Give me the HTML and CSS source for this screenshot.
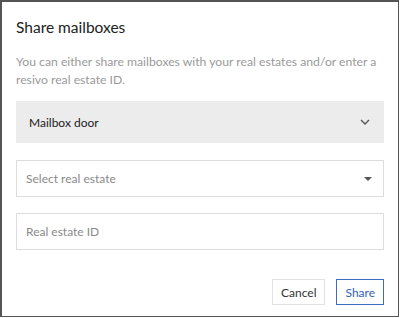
FILE: index.html
```html
<!DOCTYPE html>
<html lang="en">
<head>
    <meta charset="UTF-8">
    <meta name="viewport" content="width=device-width, initial-scale=1.0">
    <title>Share mailboxes</title>
    <link rel="stylesheet" href="styles.css">
</head>
<body>
    <div class="dialog">
        <h2 class="dialog-title">Share mailboxes</h2>
        <p class="dialog-text">You can either share mailboxes with your real estates and/or enter a resivo real estate ID.</p>

        <div class="accordion">
            <span>Mailbox door</span>
            <svg class="chevron" width="10" height="6" viewBox="0 0 10 6">
                <path d="M1 1 L5 5 L9 1" fill="none" stroke="#555" stroke-width="1.4"/>
            </svg>
        </div>

        <div class="field select">
            <span>Select real estate</span>
            <span class="caret"></span>
        </div>

        <div class="field">
            <span>Real estate ID</span>
        </div>

        <div class="actions">
            <button class="btn">Cancel</button>
            <button class="btn btn-primary">Share</button>
        </div>
    </div>
</body>
</html>
```

FILE: styles.css
```css
body {
    margin: 0;
    padding: 0;
    background: #fff;
    font-family: Lato, "Noto Sans", sans-serif;
}

.dialog {
    box-sizing: border-box;
    width: 399px;
    height: 317px;
    border: 1px solid #555;
    border-left-width: 2px;
    border-top-width: 2px;
    padding: 0 14px 0 14px;
    display: flex;
    flex-direction: column;
}

.dialog-title {
    margin: 14px 0 0 0;
    font-size: 15.5px;
    font-weight: 400;
    color: #222;
    line-height: 22px;
}

.dialog-text {
    margin: 15px 0 0 0;
    font-size: 12.2px;
    line-height: 18px;
    color: #9a9a9a;
}

.accordion {
    margin-top: 12px;
    height: 42px;
    background: #ececec;
    display: flex;
    align-items: center;
    justify-content: space-between;
    padding: 0 13px;
    font-size: 12px;
    color: #222;
}

.chevron {
    margin-right: 1px;
}

.field {
    box-sizing: border-box;
    height: 37px;
    border: 1px solid #dcdcdc;
    display: flex;
    align-items: center;
    justify-content: space-between;
    padding: 0 9px 0 9px;
    font-size: 12px;
    color: #8a8a8a;
    margin-top: 16px;
}

.select {
    margin-top: 17px;
}

.caret {
    width: 0;
    height: 0;
    border-left: 4px solid transparent;
    border-right: 4px solid transparent;
    border-top: 4px solid #555;
    margin-right: 2px;
}

.actions {
    display: flex;
    justify-content: flex-end;
    gap: 11px;
    margin-top: 29px;
}

.btn {
    font-family: inherit;
    font-size: 12px;
    height: 26px;
    padding: 0 8px;
    background: #fff;
    color: #333;
    border: 1px solid #e2e2e2;
}

.btn-primary {
    color: #2f5fb8;
    border-color: #3e6cc4;
}
```
